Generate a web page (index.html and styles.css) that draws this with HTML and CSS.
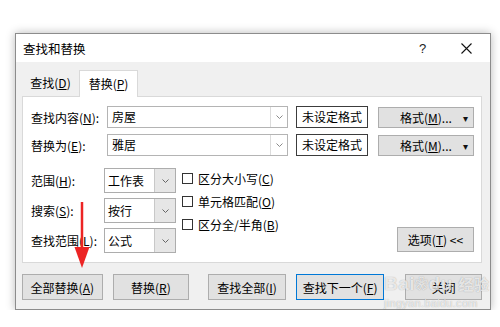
FILE: index.html
```html
<!DOCTYPE html>
<html lang="zh-CN">
<head>
    <meta charset="UTF-8">
    <meta name="viewport" content="width=device-width, initial-scale=1.0">
    <title>查找和替换</title>
    <link rel="stylesheet" href="styles.css">
</head>
<body>
    <div class="page">
        <div class="dialog">
            <div class="titlebar">
                <span class="title">查找和替换</span>
                <span class="help">?</span>
                <span class="close">
                    <svg width="11" height="11" viewBox="0 0 11 11"><path d="M0.5 0.5 L10.5 10.5 M10.5 0.5 L0.5 10.5" stroke="#111" stroke-width="1.1" fill="none"/></svg>
                </span>
            </div>
            <div class="content">
                <div class="tabs">
                    <div class="tab">查找(<u>D</u>)</div>
                    <div class="tab active">替换(<u>P</u>)</div>
                </div>
                <div class="panel">
                    <div class="row">
                        <label class="row-label">查找内容(<u>N</u>):</label>
                        <div class="combo">
                            <span class="combo-text">房屋</span>
                            <span class="combo-arrow"><svg width="7" height="4" viewBox="0 0 7 4"><path d="M0.5 0.5 L3.5 3.5 L6.5 0.5" stroke="#8a8a8a" fill="none"/></svg></span>
                        </div>
                        <div class="fmt-preview">未设定格式</div>
                        <button class="btn fmt-btn"><span>格式(<u>M</u>)...</span><span class="caret">▾</span></button>
                    </div>
                    <div class="row second">
                        <label class="row-label">替换为(<u>E</u>):</label>
                        <div class="combo">
                            <span class="combo-text">雅居</span>
                            <span class="combo-arrow"><svg width="7" height="4" viewBox="0 0 7 4"><path d="M0.5 0.5 L3.5 3.5 L6.5 0.5" stroke="#8a8a8a" fill="none"/></svg></span>
                        </div>
                        <div class="fmt-preview">未设定格式</div>
                        <button class="btn fmt-btn"><span>格式(<u>M</u>)...</span><span class="caret">▾</span></button>
                    </div>
                    <div class="options">
                        <div class="selects">
                            <div class="sel-row">
                                <label class="sel-label">范围(<u>H</u>):</label>
                                <div class="select"><span class="select-text">工作表</span><span class="select-arrow"><svg width="7" height="4" viewBox="0 0 7 4"><path d="M0.5 0.5 L3.5 3.5 L6.5 0.5" stroke="#666" fill="none"/></svg></span></div>
                            </div>
                            <div class="sel-row">
                                <label class="sel-label">搜索(<u>S</u>):</label>
                                <div class="select"><span class="select-text">按行</span><span class="select-arrow"><svg width="7" height="4" viewBox="0 0 7 4"><path d="M0.5 0.5 L3.5 3.5 L6.5 0.5" stroke="#666" fill="none"/></svg></span></div>
                            </div>
                            <div class="sel-row">
                                <label class="sel-label">查找范围(<u>L</u>):</label>
                                <div class="select"><span class="select-text">公式</span><span class="select-arrow"><svg width="7" height="4" viewBox="0 0 7 4"><path d="M0.5 0.5 L3.5 3.5 L6.5 0.5" stroke="#666" fill="none"/></svg></span></div>
                            </div>
                        </div>
                        <div class="checks">
                            <div class="check"><span class="box"></span>区分大小写(<u>C</u>)</div>
                            <div class="check"><span class="box"></span>单元格匹配(<u>O</u>)</div>
                            <div class="check"><span class="box"></span>区分全/半角(<u>B</u>)</div>
                        </div>
                        <button class="btn opt-btn">选项(<u>T</u>) &lt;&lt;</button>
                    </div>
                </div>
                <div class="actions">
                    <button class="btn act act-all">全部替换(<u>A</u>)</button>
                    <button class="btn act act-one">替换(<u>R</u>)</button>
                    <button class="btn act act-findall">查找全部(<u>I</u>)</button>
                    <button class="btn act act-next">查找下一个(<u>F</u>)</button>
                    <button class="btn act act-close">关闭</button>
                </div>
            </div>
        </div>
    </div>

    <svg class="pointer" width="20" height="72" viewBox="0 0 20 72">
        <line x1="10" y1="0" x2="10" y2="50" stroke="#ec2424" stroke-width="2.5"/>
        <polygon points="2.5,45 17.5,45 10,66" fill="#ec2424"/>
    </svg>

    <div class="watermark">
        <div class="wm-logo">Bai<span class="wm-paw">❀</span>du <span class="wm-cn">经验</span></div>
        <div class="wm-url">jingyan.baidu.com</div>
    </div>
</body>
</html>
```

FILE: styles.css
```css
body {
    margin: 0;
    font-family: "Noto Sans CJK SC", "Microsoft YaHei", sans-serif;
    font-size: 12px;
    color: #000;
    background: #fff;
}
u {
    text-underline-offset: 1px;
}
.page {
    padding: 33px 0 0 15px;
}
.dialog {
    width: 474px;
    border: 1px solid #8c8c8c;
    box-shadow: 0 0 9px rgba(0, 0, 0, 0.28);
}
.titlebar {
    height: 28px;
    background: #fff;
    display: flex;
    align-items: center;
    padding-left: 7px;
}
.title {
    flex: 1;
    font-size: 12.5px;
}
.help {
    width: 8px;
    margin-right: 34px;
    font-family: "Liberation Sans", sans-serif;
    font-size: 13px;
    color: #222;
}
.close {
    width: 11px;
    height: 11px;
    margin-right: 18px;
    display: flex;
}
.content {
    background: #f0f0f0;
    padding: 8px 8px 9px 6px;
}
.tabs {
    display: flex;
    height: 27px;
    margin-bottom: -1px;
}
.tab {
    width: 57px;
    height: 26px;
    line-height: 26px;
    text-align: center;
}
.tab.active {
    box-sizing: border-box;
    width: 59px;
    height: 27px;
    background: #fff;
    border: 1px solid #d9d9d9;
    border-bottom: none;
    position: relative;
    z-index: 1;
}
.panel {
    background: #fff;
    border: 1px solid #d9d9d9;
    padding: 9px 7px 9px 8px;
}
.row {
    display: flex;
    align-items: center;
    height: 22px;
}
.row.second {
    margin-top: 6px;
}
.row-label {
    width: 76px;
}
.combo {
    box-sizing: border-box;
    width: 181px;
    height: 22px;
    border: 1px solid #b4b4b4;
    display: flex;
}
.combo-text {
    flex: 1;
    padding-left: 4px;
    line-height: 20px;
}
.combo-arrow {
    width: 16px;
    border-left: 1px solid #dcdcdc;
    display: flex;
    align-items: center;
    justify-content: center;
}
.fmt-preview {
    box-sizing: border-box;
    width: 72px;
    height: 22px;
    margin-left: 8px;
    border: 1px solid #3c3c3c;
    text-align: center;
    line-height: 20px;
}
.btn {
    box-sizing: border-box;
    font: inherit;
    color: #000;
    background: #e1e1e1;
    border: 1px solid #adadad;
    padding: 0;
    margin: 0;
}
.fmt-btn {
    width: 96px;
    height: 21px;
    margin-left: 10px;
    display: flex;
    align-items: center;
    justify-content: space-between;
    padding: 0 5px 0 21px;
}
.caret {
    font-size: 10px;
    color: #111;
}
.options {
    display: flex;
    margin-top: 12px;
}
.selects {
    display: flex;
    flex-direction: column;
    gap: 5px;
}
.sel-row {
    display: flex;
    align-items: center;
    height: 25px;
}
.sel-label {
    width: 73px;
}
.select {
    box-sizing: border-box;
    width: 72px;
    height: 25px;
    border: 1px solid #adadad;
    display: flex;
}
.select-text {
    flex: 1;
    padding-left: 3px;
    line-height: 23px;
}
.select-arrow {
    width: 20px;
    background: #e6e6e6;
    border-left: 1px solid #c8c8c8;
    display: flex;
    align-items: center;
    justify-content: center;
}
.checks {
    margin-left: 6px;
    margin-top: -1px;
}
.check {
    height: 23px;
    display: flex;
    align-items: center;
}
.box {
    box-sizing: border-box;
    width: 11px;
    height: 11px;
    border: 1px solid #333;
    background: #fff;
    margin-right: 5px;
}
.opt-btn {
    width: 77px;
    height: 25px;
    margin-left: auto;
    align-self: flex-end;
    margin-bottom: 1px;
}
.actions {
    display: flex;
    margin-top: 11px;
}
.act {
    height: 26px;
}
.act-all {
    width: 81px;
}
.act-one {
    width: 77px;
    margin-left: 10px;
}
.act-findall {
    width: 78px;
    margin-left: 19px;
}
.act-next {
    width: 89px;
    margin-left: 10px;
    border-color: #0078d7;
}
.act-close {
    width: 77px;
    margin-left: 21px;
}
.pointer {
    position: absolute;
    left: 72px;
    top: 202px;
}
.watermark {
    position: absolute;
    left: 384px;
    top: 272px;
    color: rgba(255, 255, 255, 0.75);
    text-shadow: 0 0 1px rgba(0, 0, 0, 0.35);
    font-family: "Liberation Sans", sans-serif;
}
.wm-logo {
    font-size: 19px;
    font-weight: bold;
    line-height: 24px;
    letter-spacing: 0.5px;
}
.wm-paw {
    font-size: 13px;
    vertical-align: top;
}
.wm-cn {
    font-family: "Noto Sans CJK SC", sans-serif;
    font-size: 15px;
}
.wm-url {
    font-size: 11px;
    line-height: 14px;
    letter-spacing: 0.3px;
}
```
